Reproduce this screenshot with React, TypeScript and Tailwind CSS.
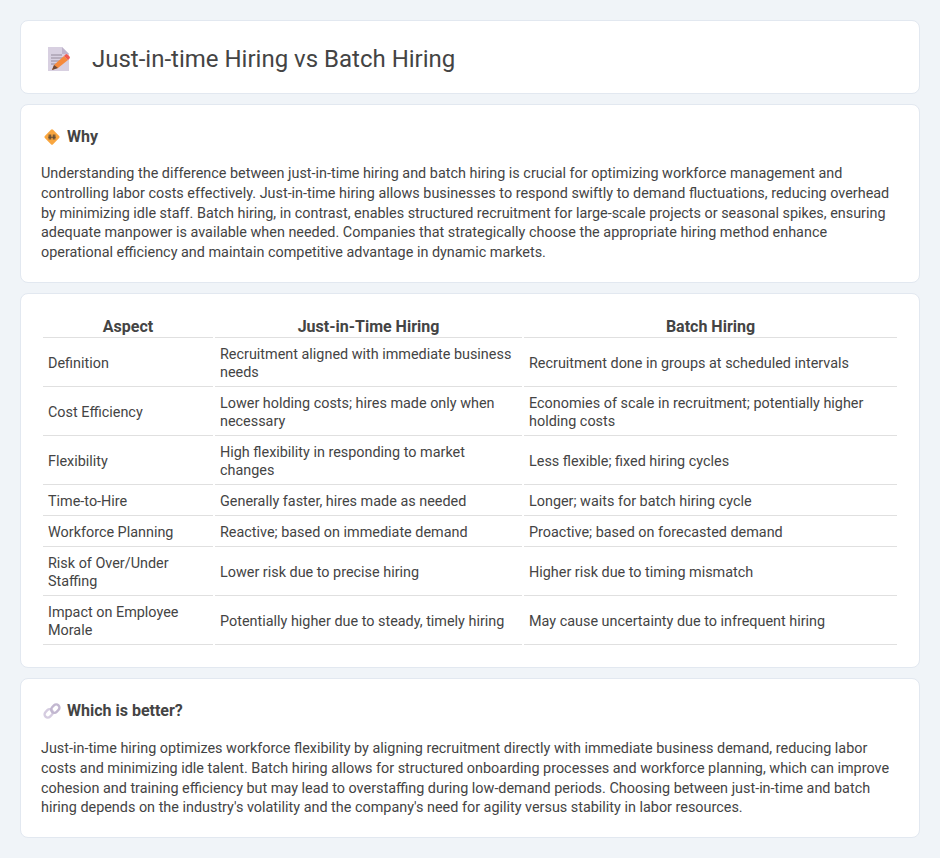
const rows = [
  ["Definition", "Recruitment aligned with immediate business needs", "Recruitment done in groups at scheduled intervals"],
  ["Cost Efficiency", "Lower holding costs; hires made only when necessary", "Economies of scale in recruitment; potentially higher holding costs"],
  ["Flexibility", "High flexibility in responding to market changes", "Less flexible; fixed hiring cycles"],
  ["Time-to-Hire", "Generally faster, hires made as needed", "Longer; waits for batch hiring cycle"],
  ["Workforce Planning", "Reactive; based on immediate demand", "Proactive; based on forecasted demand"],
  ["Risk of Over/Under Staffing", "Lower risk due to precise hiring", "Higher risk due to timing mismatch"],
  ["Impact on Employee Morale", "Potentially higher due to steady, timely hiring", "May cause uncertainty due to infrequent hiring"],
];

function MemoIcon() {
  return (
    <svg width="22" height="24" viewBox="0 0 22 24" className="shrink-0">
      <path d="M0 0h14l7 7v17H0z" fill="#d8d0e1" />
      <path d="M14 0l7 7h-7z" fill="#bfb4cb" />
      <path d="M3 8h11M3 11h14M3 14h11M3 17h7" stroke="#94899c" strokeWidth="1.1" />
      <path d="M4 23l2-5 10-9 4 4-10 8z" fill="#f58a3c" />
      <path d="M16 9l1.5-1.5a1.5 1.5 0 0 1 2 0l2 2a1.5 1.5 0 0 1 0 2L20 13z" fill="#ef5a50" />
      <path d="M4 23l2-5 4 3z" fill="#6b4a3a" />
    </svg>
  );
}

function SignIcon() {
  return (
    <svg width="18" height="18" viewBox="0 0 18 18" className="shrink-0">
      <rect x="3.2" y="3.2" width="11.6" height="11.6" rx="1.5" transform="rotate(45 9 9)" fill="#f9a63f" />
      <path d="M6.2 6.5v5M7.7 6.5v5M10.3 6.5v5M11.8 6.5v5M5.2 9.2h7.6" stroke="#5f4a35" strokeWidth="1.1" />
    </svg>
  );
}

function LinkIcon() {
  return (
    <svg width="18" height="18" viewBox="0 0 18 18" fill="none" className="shrink-0">
      <rect x="1.2" y="8.2" width="9" height="6.4" rx="3.2" transform="rotate(-45 5.7 11.4)" stroke="#d5cce0" strokeWidth="2.4" />
      <rect x="7.8" y="3.4" width="9" height="6.4" rx="3.2" transform="rotate(-45 12.3 6.6)" stroke="#c2b7d0" strokeWidth="2.4" />
    </svg>
  );
}

function SectionTitle({ icon, children }: { icon: React.ReactNode; children: React.ReactNode }) {
  return (
    <h2 className="ml-[2px] flex items-center gap-[6px] text-[16px] leading-[20px] font-bold text-[#444444]">
      {icon}
      {children}
    </h2>
  );
}

export default function App() {
  return (
    <div className="min-h-[858px] bg-[#f0f4f8] p-5 font-['Roboto',sans-serif] text-[#444444]">
      <div className="flex flex-col gap-2.5">
        <header className="flex h-[74px] items-center gap-[22px] rounded-lg border border-[#e2e8f0] bg-white pt-[3px] pl-[27px]">
          <MemoIcon />
          <h1 className="text-[24px] leading-[30px] font-normal">Just-in-time Hiring vs Batch Hiring</h1>
        </header>

        <section className="h-[179px] rounded-lg border border-[#e2e8f0] bg-white px-5 pt-[22px]">
          <SectionTitle icon={<SignIcon />}>Why</SectionTitle>
          <p className="mt-[17px] text-[14.4px] leading-[19.8px]">
            Understanding the difference between just-in-time hiring and batch hiring is crucial for optimizing workforce management and controlling labor costs effectively. Just-in-time hiring allows businesses to respond swiftly to demand fluctuations, reducing overhead by minimizing idle staff. Batch hiring, in contrast, enables structured recruitment for large-scale projects or seasonal spikes, ensuring adequate manpower is available when needed. Companies that strategically choose the appropriate hiring method enhance operational efficiency and maintain competitive advantage in dynamic markets.
          </p>
        </section>

        <section className="h-[375px] rounded-lg border border-[#e2e8f0] bg-white px-5 pt-[21px]">
          <table className="w-full table-fixed border-separate border-spacing-[2px] text-[14.4px] leading-[18px]">
            <colgroup>
              <col className="w-[170px]" />
              <col className="w-[307px]" />
              <col />
            </colgroup>
            <thead>
              <tr>
                <th className="border-b border-[#e0e0e0] px-[5px] text-center text-[16px] leading-[20px] font-bold">Aspect</th>
                <th className="border-b border-[#e0e0e0] px-[5px] text-center text-[16px] leading-[20px] font-bold">Just-in-Time Hiring</th>
                <th className="border-b border-[#e0e0e0] px-[5px] text-center text-[16px] leading-[20px] font-bold">Batch Hiring</th>
              </tr>
            </thead>
            <tbody>
              {rows.map((row) => (
                <tr key={row[0]}>
                  {row.map((cell) => (
                    <td key={cell} className="border-b border-[#e0e0e0] px-[5px] pt-[6px] pb-[4px] align-middle">
                      {cell}
                    </td>
                  ))}
                </tr>
              ))}
            </tbody>
          </table>
        </section>

        <section className="h-[160px] rounded-lg border border-[#e2e8f0] bg-white px-5 pt-[22px]">
          <SectionTitle icon={<LinkIcon />}>Which is better?</SectionTitle>
          <p className="mt-[18px] text-[14.4px] leading-[19.8px]">
            Just-in-time hiring optimizes workforce flexibility by aligning recruitment directly with immediate business demand, reducing labor costs and minimizing idle talent. Batch hiring allows for structured onboarding processes and workforce planning, which can improve cohesion and training efficiency but may lead to overstaffing during low-demand periods. Choosing between just-in-time and batch hiring depends on the industry's volatility and the company's need for agility versus stability in labor resources.
          </p>
        </section>
      </div>
    </div>
  );
}
